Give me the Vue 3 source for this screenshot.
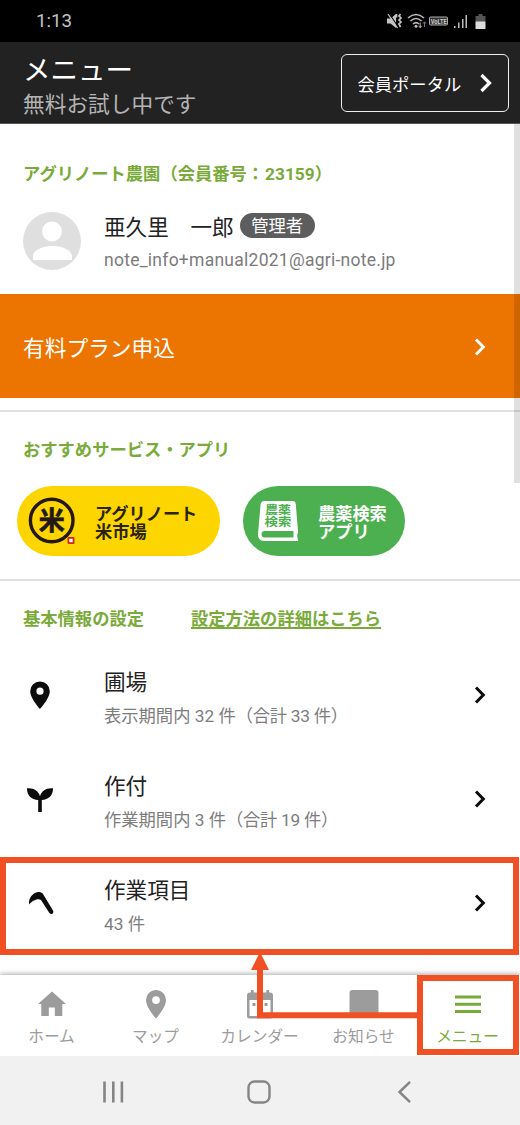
<script setup>
const settings = [
  { icon: 'pin', title: '圃場', count: '表示期間内 32 件', total: '（合計 33 件）' },
  { icon: 'sprout', title: '作付', count: '作業期間内 3 件', total: '（合計 19 件）' },
  { icon: 'sickle', title: '作業項目', count: '43 件', total: '' }
]
const tabs = [
  { icon: 'home', label: 'ホーム' },
  { icon: 'pin', label: 'マップ' },
  { icon: 'calendar', label: 'カレンダー' },
  { icon: 'news', label: 'お知らせ' },
  { icon: 'menu', label: 'メニュー', active: true }
]
</script>

<template>
  <div class="screen">
    <div class="status">
      <span class="clock">1:13</span>
      <svg class="status-icons" width="104" height="20" viewBox="0 0 104 20">
        <path d="M1 7.500h3.500l5.500-4.500v14l-5.500-4.500H1z" fill="#c4c4c4" />
        <path d="M3.300 2.500l9 14" stroke="#000" stroke-width="1.200" />
        <path d="M2 3l9.500 14" stroke="#c4c4c4" stroke-width="1.300" />
        <path d="M14.500 3l-1.500 2 2 2-2 2 2 2-2 2 1.500 3M10.500 6.500V3" fill="none" stroke="#c4c4c4" stroke-width="1.700" />
        <g fill="none" stroke="#bdbdbd" stroke-width="1.600">
          <path d="M22 7q8-7 16 0" />
          <path d="M24.500 10q5.500-5 11 0" />
          <path d="M27 13q3-2.800 6 0" />
        </g>
        <circle cx="30" cy="15.200" r="1.500" fill="#bdbdbd" />
        <path d="M34.200 11.500v5m-1.500-1.700 1.500 1.900 1.500-1.900" fill="none" stroke="#bdbdbd" />
        <path d="M38.500 16v-5m-1.500 1.700 1.500-1.900 1.500 1.900" fill="none" stroke="#777" />
        <rect x="43.500" y="6" width="18" height="8" rx="1" fill="#333" stroke="#aaa" />
        <text x="44.700" y="12.700" class="volte" textLength="16" lengthAdjust="spacingAndGlyphs">VoLTE</text>
        <g fill="#bdbdbd">
          <rect x="68" y="15" width="1.500" height="2" />
          <rect x="72" y="11.500" width="1.500" height="5.500" />
          <rect x="76" y="8" width="1.500" height="9" />
          <rect x="79.500" y="4" width="1.500" height="13" />
        </g>
        <path d="M92.500 3h4v2h3v6h-10V5h3z" fill="#555" />
        <rect x="89.500" y="10.500" width="10" height="7.500" rx=".5" fill="#ddd" />
      </svg>
    </div>

    <header class="header">
      <div class="heading">
        <h1>メニュー</h1>
        <p>無料お試し中です</p>
      </div>
      <button class="portal">
        <span>会員ポータル</span>
        <svg width="14" height="20" viewBox="0 0 14 20"><path d="M2.500 2l8 8-8 8" fill="none" stroke="#fff" stroke-width="3.200" /></svg>
      </button>
    </header>

    <main class="content">
      <section class="account">
        <h2>アグリノート農園（会員番号：<span class="number">23159</span>）</h2>
        <div class="user">
          <svg class="avatar" width="58" height="58" viewBox="0 0 58 58">
            <circle cx="29" cy="29" r="29" fill="#dfdfdf" />
            <circle cx="29" cy="19.500" r="10" fill="#fff" />
            <path d="M10 48v-4c0-5.500 9-10 19.500-10S49 38.500 49 44v4z" fill="#fff" />
          </svg>
          <div>
            <div class="name-row"><span class="name">亜久里　一郎</span><span class="role">管理者</span></div>
            <div class="email">note_info+manual2021@agri-note.jp</div>
          </div>
        </div>
      </section>

      <div class="plan">
        <span>有料プラン申込</span>
        <svg class="chevron" width="14" height="20" viewBox="0 0 14 20"><path d="M3 2.500l7.300 7.500L3 17.500" fill="none" stroke="currentColor" stroke-width="3" /></svg>
      </div>

      <section class="services">
        <h2>おすすめサービス・アプリ</h2>
        <div class="pills">
          <div class="pill market">
            <svg width="48" height="48" viewBox="0 0 48 48">
              <circle cx="23.700" cy="23.500" r="21.300" fill="none" stroke="#231815" stroke-width="3.400" />
              <text x="23.700" y="33" class="rice" text-anchor="middle">米</text>
              <rect x="39.500" y="40" width="7" height="7" rx="1" fill="#d4281e" />
              <rect x="41.300" y="41.800" width="3.400" height="3.400" fill="#fff" />
            </svg>
            <span>アグリノート<br>米市場</span>
          </div>
          <div class="pill pesticide">
            <svg width="42" height="42" viewBox="0 0 42 42">
              <path d="M7 1h29q2.500 0 2.700 2.500L41 31v2l-.7 1v4l.7 1v2H7Q1 41 1 34.500L3.500 5Q4 1 7 1z" fill="#fff" />
              <path d="M36.500 31H8q-3.500 0-3.500 3.300T8 37.500h28.500z" fill="#4caf50" />
              <text x="21" y="14.300" class="book" text-anchor="middle" textLength="26" lengthAdjust="spacingAndGlyphs">農薬</text>
              <text x="21" y="26" class="book" text-anchor="middle" textLength="27" lengthAdjust="spacingAndGlyphs">検索</text>
            </svg>
            <span>農薬検索<br>アプリ</span>
          </div>
        </div>
      </section>

      <section class="settings">
        <div class="settings-head"><h2>基本情報の設定</h2><a>設定方法の詳細はこちら</a></div>
        <div v-for="item in settings" :key="item.title" class="row">
          <svg class="row-icon" width="32" height="32" viewBox="0 0 32 32">
            <path v-if="item.icon === 'pin'" fill-rule="evenodd" d="M16 2.500a9.800 9.800 0 0 0-9.800 9.800C6.200 19.500 16 30 16 30s9.800-10.500 9.800-17.700A9.800 9.800 0 0 0 16 2.500zm0 6.100a3.600 3.600 0 1 1 0 7.200 3.600 3.600 0 0 1 0-7.200z" />
            <path v-else-if="item.icon === 'sprout'" d="M3 5.300c6.500-.8 11.500 2.500 13 8 1.500-5.500 6.500-8.800 13-8C29.200 12.200 24.500 17 17.800 17v12h-3.600V17C7.500 17 2.800 12.200 3 5.300z" />
            <path v-else d="M5.200 17.500C3.500 9 14 1.500 19 7l10 16.600c1.500 2.800-1.800 4.600-3.600 2.400L17 13C14 10.700 8 13.500 5.200 17.500z" />
          </svg>
          <div class="row-text">
            <div class="row-title">{{ item.title }}</div>
            <div class="row-detail">{{ item.count }}<span v-if="item.total" class="total">{{ item.total }}</span></div>
          </div>
          <svg class="chevron" width="14" height="20" viewBox="0 0 14 20"><path d="M3 2.500l7.300 7.500L3 17.500" fill="none" stroke="currentColor" stroke-width="3" /></svg>
        </div>
      </section>
      <div class="scrollbar"></div>
    </main>

    <nav class="tabs">
      <div v-for="tab in tabs" :key="tab.label" class="tab" :class="{ active: tab.active }">
        <svg width="32" height="32" viewBox="0 0 32 32" fill="currentColor">
          <path v-if="tab.icon === 'home'" d="M16 3.500L2 16h3.300v12h7.500v-8.500h6V28h7.500V16H30z" />
          <path v-else-if="tab.icon === 'pin'" fill-rule="evenodd" d="M16 2A10 10 0 0 0 6 12.200C6 19.500 16 30.500 16 30.500s10-11 10-18.300A10 10 0 0 0 16 2zm0 6.200a3.900 3.900 0 1 1 0 7.800 3.900 3.900 0 0 1 0-7.800z" />
          <g v-else-if="tab.icon === 'calendar'">
            <path fill-rule="evenodd" d="M7 2h2.600v2.500h12.800V2H25v2.500h1q3 0 3 3V28q0 2.500-2.500 2.500h-21Q3 30.500 3 28V7.500q0-3 3-3h1zM5.500 12v16h21V12z" />
            <path d="M8.500 15h3v3h-3zm6 0h3v3h-3zm6 0h3v3h-3z" />
          </g>
          <path v-else-if="tab.icon === 'news'" d="M4.500 2h23Q30.500 2 30.500 5v20q0 3-3 3h-23q-3 0-3-3V5q0-3 3-3z" />
          <path v-else d="M3 7.500h26v3H3zm0 7.300h26v3H3zm0 7.200h26v3H3z" />
        </svg>
        <span>{{ tab.label }}</span>
      </div>
    </nav>

    <div class="system">
      <svg width="24" height="24" viewBox="0 0 24 24"><path d="M3.500 1.500v21M12.300 1.500v21M20.900 1.500v21" stroke="#858585" stroke-width="2.600" /></svg>
      <svg width="24" height="24" viewBox="0 0 24 24"><rect x="1.500" y="1.500" width="21" height="21" rx="6" fill="none" stroke="#858585" stroke-width="2.400" /></svg>
      <svg width="24" height="24" viewBox="0 0 24 24"><path d="M18 1.800L7.500 12 18 22.200" fill="none" stroke="#858585" stroke-width="2.500" /></svg>
    </div>

    <svg class="guide" width="520" height="1125" viewBox="0 0 520 1125">
      <g fill="none" stroke="#f15025" stroke-width="6">
        <rect x="3" y="860" width="513" height="92" />
        <rect x="420" y="978" width="96" height="74" />
        <path d="M420 1015.300H260V966" />
      </g>
      <path d="M260 952l9 18h-18z" fill="#f15025" />
    </svg>
  </div>
</template>

<style>
html, body { margin: 0; background: #fff; }
</style>

<style scoped>
.screen { position: relative; width: 520px; height: 1125px; overflow: hidden; display: flex; flex-direction: column; background: #fff; color: #222; font-family: Roboto, "Noto Sans CJK JP", sans-serif; white-space: nowrap; }
h1, h2, p { margin: 0; font-weight: 400; }
svg { display: block; flex: none; }
.status { height: 42px; background: #000; box-sizing: border-box; padding: 0 33px 0 36px; display: flex; justify-content: space-between; align-items: center; }
.clock { color: #c4c4c4; font-size: 18.700px; }
.status-icons { margin-right: -3px; }
.volte { font-size: 7px; font-weight: 700; fill: #ccc; }
.header { height: 82px; background: #222; box-sizing: border-box; padding: 12px 11.500px 0 23px; display: flex; justify-content: space-between; align-items: flex-start; border-bottom: 1px solid #555; }
.heading h1 { color: #fff; font-size: 27.500px; line-height: 34px; }
.heading p { color: #b4b4b4; font-size: 21.700px; line-height: 34px; }
.portal { width: 168px; height: 58px; box-sizing: border-box; border: 1.500px solid #eee; border-radius: 6px; background: transparent; color: #fff; font: 17.300px Roboto, "Noto Sans CJK JP", sans-serif; display: flex; align-items: center; justify-content: space-between; padding: 0 15px 0 16px; }
.content { position: relative; height: 851px; flex: none; overflow: hidden; }
h2, .settings-head a { color: #7aab3a; font-size: 17.300px; font-weight: 700; line-height: 26px; }
.number { margin-left: 1px; }
.account { height: 170px; box-sizing: border-box; padding: 37px 23px 0; }
.user { display: flex; gap: 23px; margin-top: 21px; }
.avatar { margin-top: 4px; }
.name-row { display: flex; align-items: center; gap: 6px; height: 38px; }
.name { font-size: 21.600px; margin-top: -4px; }
.role { background: #5d5d5d; color: #fff; border-radius: 13px; width: 75px; height: 25px; line-height: 26px; font-size: 17.300px; text-align: center; margin-top: -3px; }
.email { color: #7b7b7b; font-size: 17.500px; line-height: 24px; margin-top: 2px; letter-spacing: .26px; }
.plan { height: 104px; box-sizing: border-box; background: #ec7400; color: #fff; padding: 1px 33px 0 23px; display: flex; align-items: center; justify-content: space-between; font-size: 21.700px; }
.services { height: 169px; box-sizing: border-box; margin-top: 12px; border-top: 2px solid #e1e1e1; padding: 25px 17px 0; }
.services h2 { padding-left: 6px; }
.pills { display: flex; gap: 23px; margin-top: 23px; }
.pill { height: 70px; border-radius: 35px; box-sizing: border-box; display: flex; align-items: center; font-size: 17.200px; line-height: 18px; font-weight: 700; }
.pill span { padding-top: 4px; }
.market { width: 203px; padding-left: 11px; gap: 19px; background: #fdd500; color: #2a2309; }
.pesticide { width: 162px; padding-left: 14px; gap: 19px; background: #4caf50; color: #fff; }
.rice { font-size: 26px; font-weight: 700; fill: #231815; stroke: #231815; stroke-width: .6; }
.book { font-size: 11.500px; font-weight: 700; fill: #4caf50; }
.settings { border-top: 2px solid #e1e1e1; padding-top: 25px; }
.settings-head { display: flex; gap: 47px; padding-left: 23px; height: 37px; }
.settings-head a { text-decoration: underline; text-underline-offset: 2px; text-decoration-thickness: 1.500px; }
.row { height: 104px; box-sizing: border-box; padding: 0 33px 0 24px; display: flex; align-items: center; }
.row-icon { fill: #0c0c0c; }
.row-text { flex: 1; margin-left: 48px; padding-top: 8px; }
.row-title { font-size: 21.600px; line-height: 34px; color: #222; }
.row-detail { font-size: 17.300px; line-height: 32px; color: #7d7d7d; }
.total { letter-spacing: -.25px; }
.row .chevron { color: #0c0c0c; }
.scrollbar { position: absolute; right: 0; top: 0; width: 6px; height: 359px; background: rgba(0, 0, 0, .12); }
.tabs { position: relative; height: 81px; flex: none; display: grid; grid-template-columns: repeat(5, 104px); background: #fff; box-shadow: 0 -1px 5px rgba(0, 0, 0, .35); }
.tab { display: flex; flex-direction: column; align-items: center; padding-top: 13px; color: #9c9c9c; font-size: 15.700px; }
.tab span { line-height: 24px; margin-top: 5px; margin-left: -1px; }
.tab.active { color: #7aab3a; }
.system { position: relative; height: 69px; background: #f1f1f1; display: flex; justify-content: space-between; align-items: center; box-sizing: border-box; padding: 3px 104px 0 101px; }
.guide { position: absolute; left: 0; top: 0; pointer-events: none; }
</style>
